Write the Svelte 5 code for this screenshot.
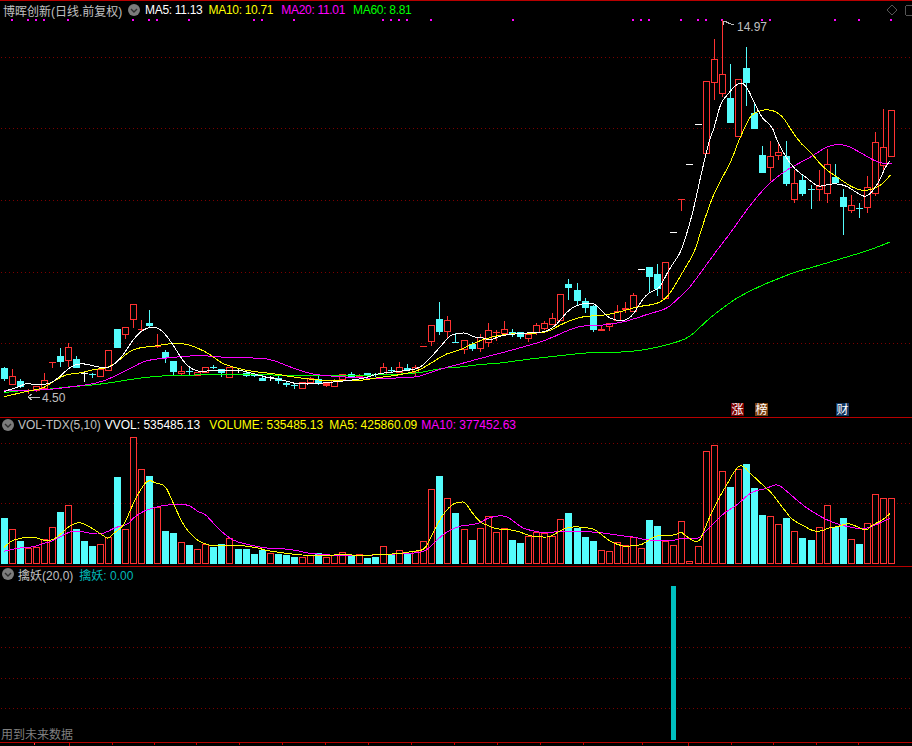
<script>
  const jumps = [14, 29, 43, 57, 71, 86, 100];
  const px = (i) => 4 + 8 * i + jumps.filter((j) => i >= j).length;

  const Z = (oy, rows) => rows.map(([t, a, b, c, d]) => [t, oy + a / 3, oy + b / 3, oy + (c ?? a) / 3, oy + (d ?? b) / 3]);
  const S = (rows) => Z(0, rows.map((r) => r.map((v, k) => (k ? v * 3 : v))));

  const candles = [
    ...Z(290, [
      ['c', 235, 267, 230, 272], ['r', 257, 281, 238, 285], ['c', 274, 292, 266, 295], ['R', 300, 302, 296, 312],
      ['r', 288, 300, 288, 306], ['r', 271, 295, 250, 300], ['R', 216, 218, 216, 235], ['c', 198, 216, 175, 232],
      ['r', 172, 211, 160, 232], ['c', 208, 233, 198, 235], ['w', 250, 252, 242, 276], ['c', 251, 253, 248, 265],
      ['r', 238, 258, 235, 260], ['r', 181, 240], ['c', 118, 174], ['r', 112, 133, 112, 147],
      ['r', 43, 88, 43, 113], ['R', 118, 121, 90, 122], ['c', 99, 107, 60, 110], ['R', 168, 172, 133, 175],
      ['c', 186, 205, 180, 218], ['c', 214, 245, 214, 255], ['r', 243, 249, 228, 255], ['c', 244, 246, 235, 255],
      ['r', 247, 256], ['r', 230, 247], ['c', 230, 232, 225, 238], ['c', 238, 248, 238, 260],
    ]),
    ...Z(290, [
      ['r', 230, 260], ['w', 240, 242, 235, 248], ['c', 248, 258, 244, 260], ['c', 256, 258, 250, 262],
      ['c', 264, 272, 255, 272], ['w', 260, 262, 258, 272], ['c', 263, 274, 258, 282], ['c', 279, 285, 272, 290],
      ['c', 285, 289, 281, 298], ['r', 277, 293], ['r', 265, 275, 262, 280], ['c', 268, 280, 258, 285],
      ['R', 280, 287, 280, 290], ['r', 271, 287, 268, 290], ['r', 253, 268], ['c', 251, 261, 246, 264],
      ['R', 257, 260, 252, 262], ['c', 250, 258, 250, 262], ['c', 253, 256, 250, 262], ['r', 232, 252, 220, 252],
      ['c', 241, 243, 232, 247], ['r', 232, 245, 217, 247], ['c', 235, 240, 222, 243], ['r', 230, 247, 225, 258],
      ['R', 168, 172], ['r', 106, 152, 106, 168], ['c', 87, 125, 36, 135], ['r', 91, 122, 78, 145], ['c', 157, 159, 130, 159],
    ]),
    ...Z(250, [
      ['r', 271, 296, 271, 312], ['c', 281, 296, 275, 302], ['r', 260, 293, 252, 305], ['r', 241, 275, 220, 290],
      ['R', 245, 250, 240, 272], ['r', 238, 249, 213, 255], ['c', 247, 251, 238, 262], ['c', 247, 262, 245, 266],
      ['r', 253, 265, 250, 275], ['r', 226, 247, 220, 255], ['r', 220, 234, 213, 240], ['r', 205, 221, 190, 225],
      ['r', 133, 209, 133, 212], ['c', 102, 113, 87, 150], ['c', 120, 152, 99, 165], ['c', 153, 173, 145, 189],
      ['c', 168, 239, 165, 246], ['R', 237, 243, 225, 243], ['r', 220, 229, 220, 243], ['r', 184, 210, 165, 212],
      ['R', 175, 180, 155, 190], ['r', 136, 184, 130, 185], ['w', 57, 59], ['c', 52, 80, 52, 125],
      ['c', 72, 117, 42, 137], ['r', 37, 143],
    ]),
    ...S([
      ['w', 232, 233], ['R', 199, 200, 199, 211], ['w', 164, 165], ['w', 124, 125], ['r', 81, 153],
      ['r', 59, 82, 39, 100], ['r', 74, 93, 20, 97], ['c', 98, 123, 64, 123], ['r', 79, 136], ['c', 68, 83, 47, 106], ['c', 113, 129, 102, 129],
    ]),
    ...Z(120, [
      ['c', 105, 158, 78, 158], ['r', 109, 142, 63, 182], ['r', 97, 106, 68, 120], ['c', 108, 191, 63, 198],
      ['r', 190, 238, 150, 248], ['c', 181, 221, 165, 228], ['c', 208, 210, 195, 267], ['r', 197, 208, 150, 243],
      ['r', 133, 220, 87, 248], ['c', 171, 189, 132, 189], ['c', 231, 260, 207, 345], ['r', 256, 271, 225, 278],
      ['c', 263, 266, 250, 293], ['r', 202, 262, 168, 278], ['r', 67, 218, 36, 228], ['r', 82, 134, -33, 152], ['r', -30, 107],
    ]),
  ];

  const bodies = candles.map(([t, bt, bb, wt, wb], i) => {
    const c = px(i);
    const top = Math.round(bt);
    const bot = Math.max(top + 1, Math.round(bb));
    return { t, c, top, bot, wt: Math.round(wt), wb: Math.round(wb) };
  });

  const V = (oy, s) => s.trim().split(/\s+/).map((v) => ({ c: v[0], y: Math.round(oy + Number(v.slice(1)) / 3) }));
  const vols = [
    ...V(415, `c309 r343 c378 r400 r396 r373 r337 c291 r271 c343 c378 c393 r388 r365 c186 r343 r67 r163 c183 r276 c348 c354 r382 c390 r403 r388 c395 c387 r369
      c401 c401 c417 c404 r414 c417 c420 c426 r427 r420 c414 r427 r421 r412 c423 r418 c429 c426 r394 c419 r406 c416 r408 r379 r223 c183 r250 c294
      r343 c375 r340 r304 r351 r340 c375 c384 r362 r352 r355 r362 r313 c294 c339 c366 c378 r406 r409 r382 r390 r366 r400 c315 c333 r378 r390 r319 r438`),
    ...V(400, `r439 r153 r136 r214 c261 r208 c192 c264 c345 r349 r373 c354 r394 c414 c420 r382 r316 c381 c354 r418 c432 r370 r283 r295 r295`),
  ];

  const P = (ox, oy, s) => s.trim().split(/\s+/).map((p) => {
    const [a, b] = p.split(',').map(Number);
    return [ox + a / 3, oy + b / 3];
  });

  function curve(pts) {
    let d = `M${pts[0][0].toFixed(1)} ${pts[0][1].toFixed(1)}`;
    for (let i = 1; i < pts.length - 1; i++) {
      const mx = (pts[i][0] + pts[i + 1][0]) / 2;
      const my = (pts[i][1] + pts[i + 1][1]) / 2;
      d += `Q${pts[i][0].toFixed(1)} ${pts[i][1].toFixed(1)} ${mx.toFixed(1)} ${my.toFixed(1)}`;
    }
    const last = pts[pts.length - 1];
    return d + `L${last[0].toFixed(1)} ${last[1].toFixed(1)}`;
  }

  const ma5 = curve([
    ...P(0, 290, '12,305 30,298 60,290 75,280 100,283 130,285 155,278 180,260 200,240 220,225 250,220 280,228 320,236 345,222 370,195 395,155 420,125 445,112 470,112 490,125 520,165 550,215 575,238 600,245 640,241 690,240'),
    ...P(230, 290, '20,240 50,245 85,255 120,265 150,267 190,280 215,282 250,282 290,278 330,274 370,270 410,263 440,252 470,248 520,243 570,235 600,205 640,160 660,135 690,130'),
    ...P(460, 250, '20,248 40,262 70,263 90,272 110,262 130,255 190,250 230,247 260,245 290,225 320,185 350,165 390,157 410,165 440,200 470,212 495,212 520,195 545,150 570,125 600,115 620,70 650,25 665,0'),
    ...P(672, 120, '60,290 90,150 115,50'),
    ...P(672, 0, '125,390 145,310 165,285 195,250 220,250 245,305 270,355 290,370 305,390'),
    ...P(672, 120, '310,50 340,110 370,150 400,170 430,195 445,200 480,190 520,195 560,222 585,233 620,190 640,140 655,122'),
  ]);
  const ma10 = curve([
    ...P(0, 290, '12,320 50,311 100,300 130,295 170,268 200,252 240,250 280,238 320,235 350,218 385,185 420,172 470,168 510,160 550,160 590,172 630,193 665,220 690,228'),
    ...P(230, 290, '40,240 90,247 140,252 170,258 220,265 280,272 340,272 400,271 430,265 500,256 540,248 570,240 610,215 650,190 690,181'),
    ...P(460, 250, '40,280 80,265 130,253 200,250 260,248 300,225 340,207 380,198 440,196 500,180 540,168 590,163 625,140 660,80 690,30'),
    ...P(672, 120, '70,390 100,290 130,210 180,120 200,60 225,10'),
    ...P(672, 0, '240,340 290,325 330,345 357,390'),
    ...P(672, 120, '390,75 420,100 450,140 500,175 550,208 590,213 630,195 655,165'),
  ]);
  const ma20 = curve([
    ...P(0, 290, '12,303 60,301 130,300 180,295 240,287 290,280 340,262 400,230 440,210 490,205 540,200 600,196 650,200 690,203'),
    ...P(230, 290, '90,204 130,210 190,235 250,254 300,258 360,262 420,265 520,264 570,260 620,240 690,222'),
    ...P(460, 250, '50,328 120,310 200,288 260,270 310,247 360,227 420,227 500,215 570,190 620,178 660,140 690,113'),
    ...P(672, 120, '135,390 175,340 230,260 290,190 350,145 420,110 470,75 520,73 560,95 620,130 660,130'),
  ]);
  const ma60 = curve([
    ...P(0, 290, '12,308 60,301 130,300 190,292 240,288 300,283 400,267 470,258 540,256 690,253'),
    ...P(230, 290, '100,253 180,258 260,257 340,257 440,255 520,252 580,247 640,233 690,232'),
    ...P(460, 250, '60,343 120,340 200,328 300,317 390,307 500,307 580,295 640,280 690,262'),
    ...[[705, 322], [720, 310], [735, 299], [750, 291], [765, 284], [780, 278], [795, 272], [810, 268], [830, 262], [850, 256], [870, 250], [890, 242]],
  ]);

  const volMa5 = curve([
    ...P(0, 415, '12,398 30,378 60,370 80,367 110,367 135,379 160,375 185,355 205,335 230,322 250,325 280,342 310,362 325,373 340,355 370,335 385,300 400,265 420,225 445,192 470,207 495,208 520,265 545,320 565,350 590,375 610,385 640,394 690,391'),
    ...P(230, 415, '30,391 60,395 85,399 115,408 150,412 185,417 210,420 250,421 300,421 325,419 350,419 380,421 420,421 450,418 490,417 510,416 540,410 565,407 580,405 595,385 620,330 645,290 670,265 690,262'),
    ...P(460, 415, '15,260 30,285 60,322 85,332 110,343 160,344 190,355 215,364 240,365 255,367 275,364 295,350 320,338 345,335 370,337 400,341 420,355 450,380 480,391 500,395 520,391 545,391 570,372 590,361 630,361 645,360 665,350'),
    ...P(682, 400, '0,398 20,415 50,430 65,395 85,345 110,295 130,262 150,225 170,197 185,198 210,225 250,262 270,280 300,320 330,360 370,380 390,392 415,395 440,383 470,380 490,371 510,372 540,388 555,391 570,375 600,362 625,340'),
  ]);
  const volMa10 = curve([
    ...P(0, 415, '12,409 30,405 60,398 100,397 130,385 160,378 190,360 210,350 240,347 275,357 310,357 340,340 365,332 385,328 400,308 430,288 470,276 495,270 540,268 570,270 595,292 615,296 640,325 665,350 690,370'),
    ...P(230, 415, '20,380 50,388 90,396 120,401 160,401 200,406 230,414 270,418 330,422 420,421 460,418 500,417 560,414 580,410 600,398 620,375 650,350 690,333'),
    ...P(460, 415, '20,331 50,327 65,320 90,306 130,301 150,310 185,338 210,346 250,354 290,350 360,349 430,353 480,362 530,367 550,374 630,379 660,371'),
    ...P(682, 400, '0,415 50,418 70,395 100,365 130,335 160,320 200,282 225,270 250,268 285,250 310,270 365,318 400,340 430,358 470,374 530,387 560,385 590,370 625,355'),
  ]);

  const dots = [12, 28, 36, 44, 68, 133, 149, 157, 189, 254, 262, 294, 383, 391, 399, 407, 431, 513, 633, 641, 649, 681, 698, 706, 722, 762, 770, 835, 859, 891];
  const mainGrid = [57, 128, 200, 272, 343];
  const volGrid = [443, 503];
  const lowGrid = [617, 647, 678, 708];
  const ticks = [69, 112, 154, 196, 239, 282, 325, 368, 411, 454, 497, 540, 583, 642, 688, 731, 773, 816, 858];
  const badges = [
    { x: 731, cls: 'rise', label: '涨' },
    { x: 755, cls: 'rank', label: '榜' },
    { x: 836, cls: 'cash', label: '财' },
  ];
</script>

{#snippet chevron()}
  <svg class="chev" viewBox="0 0 12 12" width="12" height="12" aria-hidden="true">
    <circle cx="6" cy="6" r="6" class="chev-disc" />
    <path d="M3 5l3 3 3-3" class="chev-mark" />
  </svg>
{/snippet}

{#snippet gridlines(list)}
  {#each list as y}
    <line x1="1" x2="912" y1={y + 0.5} y2={y + 0.5} class="grid" />
  {/each}
{/snippet}

<div class="chart">
  <section class="panel main">
    <div class="legend first">
      <span class="cjk title">博晖创新(日线.前复权)</span>
      {@render chevron()}
      <span class="white m1">MA5: 11.13</span>
      <span class="yellow m2">MA10: 10.71</span>
      <span class="magenta m6">MA20: 11.01</span>
      <span class="green m6">MA60: 8.81</span>
    </div>
    <svg viewBox="0 1 912 416" width="912" height="416">
      {@render gridlines(mainGrid)}
      {#each dots as x}
        <rect x={x - 1} y="19" width="2" height="2" class="dot" />
      {/each}
      {#each bodies as b}
        {#if b.wt < b.top}
          <rect x={b.c} y={b.wt} width="1" height={b.top - b.wt} class="wick-{b.t}" />
        {/if}
        {#if b.wb > b.bot}
          <rect x={b.c} y={b.bot} width="1" height={b.wb - b.bot} class="wick-{b.t}" />
        {/if}
        {#if b.t === 'r'}
          <rect x={b.c - 2.5} y={b.top + 0.5} width="6" height={b.bot - b.top} class="hollow" />
        {:else}
          <rect x={b.c - 3} y={b.top} width="7" height={b.bot - b.top} class="solid-{b.t}" />
        {/if}
      {/each}
      <path d={ma60} class="ma l-green" />
      <path d={ma20} class="ma l-magenta" />
      <path d={ma10} class="ma l-yellow" />
      <path d={ma5} class="ma l-white" />

      <path d="M723 21h4M723 21v4M723 21l11 4" class="pointer" />
      <text x="737" y="31" class="price">14.97</text>
      <path d="M28 397l4-3M28 397l4 3M28 397h12" class="pointer" />
      <text x="42" y="402" class="price">4.50</text>

      <path d="M892 5l5 5-5 5-5-5z" class="ghost" />
      <rect x="905.5" y="5.5" width="12" height="10" rx="2" class="ghost" />

      {#each badges as b}
        <rect x={b.x} y="403" width="13" height="13" class="badge-{b.cls}" />
        <text x={b.x + 0.5} y="414" class="badge-text">{b.label}</text>
      {/each}
    </svg>
  </section>

  <section class="panel vol">
    <div class="legend">
      {@render chevron()}
      <span class="grey m3 full">VOL-TDX(5,10)</span>
      <span class="white m8 wide">VVOL: 535485.13</span>
      <span class="yellow m7 wide">VOLUME: 535485.13</span>
      <span class="yellow m2 wide">MA5: 425860.09</span>
      <span class="magenta m8 wide">MA10: 377452.63</span>
    </div>
    <svg viewBox="0 418 912 148" width="912" height="148">
      {@render gridlines(volGrid)}
      {#each vols as v, i}
        {#if v.c === 'r'}
          <rect x={px(i) - 2.5} y={v.y + 0.5} width="6" height={563 - v.y} class="hollow" />
        {:else}
          <rect x={px(i) - 3} y={v.y} width="7" height={564 - v.y} class="solid-c" />
        {/if}
      {/each}
      <path d={volMa10} class="ma l-magenta" />
      <path d={volMa5} class="ma l-yellow" />
    </svg>
  </section>

  <section class="panel low">
    <div class="legend">
      {@render chevron()}
      <span class="grey m3 cjk">擒妖(20,0)</span>
      <span class="teal m5 cjk">擒妖: 0.00</span>
    </div>
    <svg viewBox="0 567 912 175" width="912" height="175">
      {@render gridlines(lowGrid)}
      <rect x="671" y="586" width="5" height="154" class="signal" />
    </svg>
    <span class="note cjk">用到未来数据</span>
  </section>

  <section class="panel axis">
    <svg viewBox="0 743 912 3" width="912" height="3">
      <rect x="34" y="743" width="1" height="2" class="tick-soft" />
      {#each ticks as x}
        <rect {x} y="743" width="1" height={x === 688 || x === 69 ? 3 : 2} class="tick" />
      {/each}
    </svg>
  </section>
</div>

<style>
  :global(body) {
    margin: 0;
    background: #000;
  }
  .chart {
    width: 912px;
    height: 746px;
    background: #000;
    display: flex;
    flex-direction: column;
    overflow: hidden;
    font-family: "Liberation Sans", "Noto Sans CJK SC", sans-serif;
    font-size: 12px;
    letter-spacing: -0.3px;
  }
  .panel {
    position: relative;
    border-top: 1px solid #b80000;
  }
  .panel svg {
    display: block;
  }
  .panel > svg {
    shape-rendering: crispEdges;
  }
  .legend {
    position: absolute;
    left: 2px;
    top: -1px;
    height: 16px;
    display: flex;
    align-items: center;
    white-space: nowrap;
    color: #c0c0c0;
    z-index: 1;
  }
  .legend.first {
    left: 3px;
    top: 0;
    height: 18px;
  }
  .cjk {
    font-family: "Liberation Sans", "Noto Sans CJK SC", sans-serif;
    letter-spacing: 0;
  }
  .title {
    width: 125px;
    color: #c0c0c0;
  }
  .chev {
    flex: none;
  }
  .chev-disc {
    fill: #7c7c7c;
  }
  .chev-mark {
    fill: none;
    stroke: #2e2e2e;
    stroke-width: 1.4;
  }
  .white { color: #fff; }
  .yellow { color: #ff0; }
  .magenta { color: #f0f; }
  .green { color: #0f0; }
  .grey { color: #c0c0c0; }
  .teal { color: #00b8b8; }
  .m1 { margin-left: 5px; }
  .m2 { margin-left: 6px; }
  .m3 { margin-left: 4px; }
  .m5 { margin-left: 6px; }
  .m6 { margin-left: 8px; }
  .m7 { margin-left: 9px; }
  .m8 { margin-left: 4px; }
  .wide { letter-spacing: 0; }
  .full { letter-spacing: -0.05px; }

  .grid {
    stroke: #7c0000;
    stroke-width: 1;
    stroke-dasharray: 1 3;
  }
  .dot { fill: #ff00ff; }
  .hollow {
    fill: #000;
    stroke: #ff3232;
    stroke-width: 1;
  }
  .solid-c, .wick-c { fill: #54fcfc; }
  .solid-R, .wick-R, .wick-r { fill: #ff3232; }
  .solid-w, .wick-w { fill: #fff; }
  .ma {
    fill: none;
    stroke-width: 1;
  }
  .l-white { stroke: #fff; }
  .l-yellow { stroke: #ff0; }
  .l-magenta { stroke: #f0f; }
  .l-green { stroke: #0f0; }
  .pointer {
    fill: none;
    stroke: #c0c0c0;
  }
  .price {
    fill: #c0c0c0;
    font-size: 12px;
    letter-spacing: 0;
    shape-rendering: auto;
  }
  .ghost {
    fill: none;
    stroke: #555;
  }
  .badge-rise { fill: #7c0000; }
  .badge-rank { fill: #7a4010; }
  .badge-cash { fill: #103560; }
  .badge-text {
    fill: #fff;
    font-size: 12px;
    letter-spacing: 0;
  }
  .signal { fill: #00c0c0; }
  .note {
    position: absolute;
    left: 1px;
    bottom: -1px;
    color: #7f7f7f;
    line-height: 16px;
  }
  .tick { fill: #c00000; }
  .tick-soft { fill: #ff4040; }
</style>
